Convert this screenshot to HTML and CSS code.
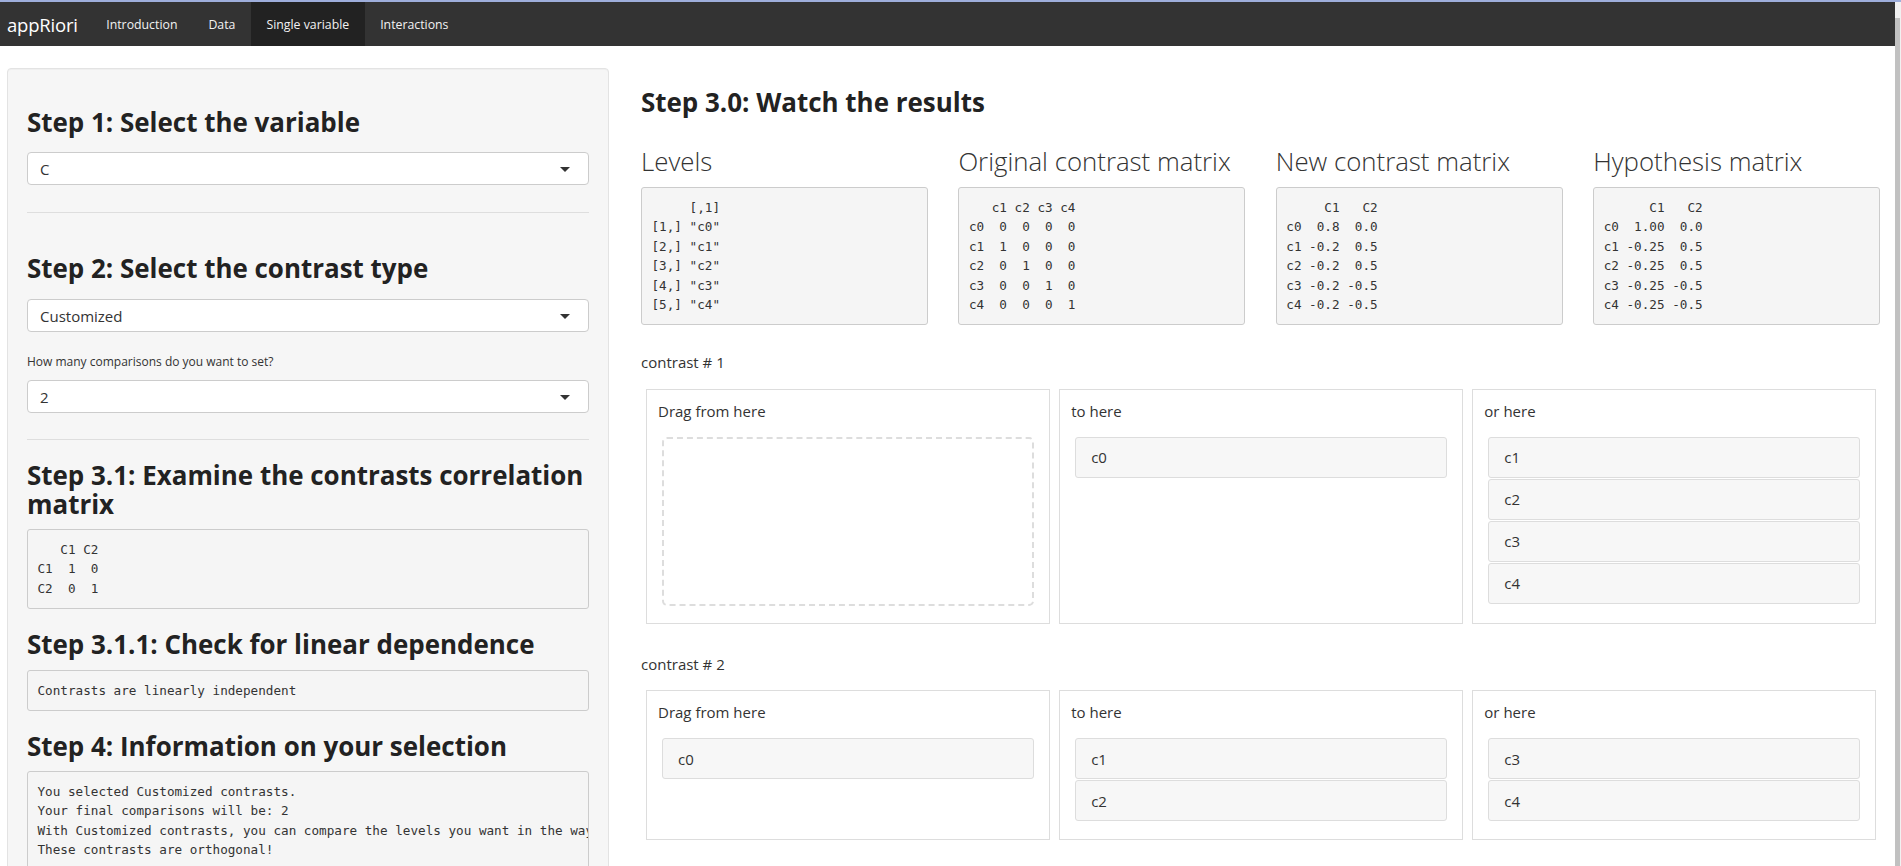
FILE: index.html
```
<!DOCTYPE html>
<html lang="en">
<head>
<meta charset="utf-8">
<title>appRiori</title>
<link rel="stylesheet" href="styles.css">
</head>
<body>
<div class="screen">
  <div class="viewport">
    <nav class="navbar">
      <span class="brand">appRiori</span>
      <ul class="nav">
        <li><a>Introduction</a></li>
        <li><a>Data</a></li>
        <li class="active"><a>Single variable</a></li>
        <li><a>Interactions</a></li>
      </ul>
    </nav>
    <div class="layout">
      <aside class="well">
        <h3 class="step s1">Step 1: Select the variable</h3>
        <div class="select"><span>C</span><i class="caret"></i></div>
        <hr class="hr1">
        <h3 class="step s2">Step 2: Select the contrast type</h3>
        <div class="select"><span>Customized</span><i class="caret"></i></div>
        <label class="small-label">How many comparisons do you want to set?</label>
        <div class="select"><span>2</span><i class="caret"></i></div>
        <hr class="hr2">
        <h3 class="step s31">Step 3.1: Examine the contrasts correlation matrix</h3>
        <pre class="out">   C1 C2
C1  1  0
C2  0  1</pre>
        <h3 class="step s311">Step 3.1.1: Check for linear dependence</h3>
        <pre class="out">Contrasts are linearly independent</pre>
        <h3 class="step s4">Step 4: Information on your selection</h3>
        <pre class="out">You selected Customized contrasts.
Your final comparisons will be: 2
With Customized contrasts, you can compare the levels you want in the way you want.
These contrasts are orthogonal!</pre>
      </aside>
      <main class="main">
        <h3 class="step s30">Step 3.0: Watch the results</h3>
        <div class="results">
          <section class="result">
            <h3 class="result-title">Levels</h3>
            <pre class="out">     [,1]
[1,] "c0"
[2,] "c1"
[3,] "c2"
[4,] "c3"
[5,] "c4"</pre>
          </section>
          <section class="result">
            <h3 class="result-title">Original contrast matrix</h3>
            <pre class="out">   c1 c2 c3 c4
c0  0  0  0  0
c1  1  0  0  0
c2  0  1  0  0
c3  0  0  1  0
c4  0  0  0  1</pre>
          </section>
          <section class="result">
            <h3 class="result-title">New contrast matrix</h3>
            <pre class="out">     C1   C2
c0  0.8  0.0
c1 -0.2  0.5
c2 -0.2  0.5
c3 -0.2 -0.5
c4 -0.2 -0.5</pre>
          </section>
          <section class="result">
            <h3 class="result-title">Hypothesis matrix</h3>
            <pre class="out">      C1   C2
c0  1.00  0.0
c1 -0.25  0.5
c2 -0.25  0.5
c3 -0.25 -0.5
c4 -0.25 -0.5</pre>
          </section>
        </div>

        <div class="contrast-label first">contrast # 1</div>
        <div class="buckets">
          <div class="bucket">
            <div class="bucket-title">Drag from here</div>
            <div class="bucket-list empty"></div>
          </div>
          <div class="bucket">
            <div class="bucket-title">to here</div>
            <div class="bucket-list">
              <div class="item">c0</div>
            </div>
          </div>
          <div class="bucket">
            <div class="bucket-title">or here</div>
            <div class="bucket-list">
              <div class="item">c1</div>
              <div class="item">c2</div>
              <div class="item">c3</div>
              <div class="item">c4</div>
            </div>
          </div>
        </div>

        <div class="contrast-label second">contrast # 2</div>
        <div class="buckets">
          <div class="bucket">
            <div class="bucket-title">Drag from here</div>
            <div class="bucket-list">
              <div class="item">c0</div>
            </div>
          </div>
          <div class="bucket">
            <div class="bucket-title">to here</div>
            <div class="bucket-list">
              <div class="item">c1</div>
              <div class="item">c2</div>
            </div>
          </div>
          <div class="bucket">
            <div class="bucket-title">or here</div>
            <div class="bucket-list">
              <div class="item">c3</div>
              <div class="item">c4</div>
            </div>
          </div>
        </div>
      </main>
    </div>
  </div>
  <div class="scrollbar"><div class="thumb"></div></div>
</div>
</body>
</html>
```

FILE: styles.css
```
* { box-sizing: border-box; }

html, body {
  margin: 0;
  padding: 0;
  height: 866px;
  overflow: hidden;
  background: #fff;
}

body {
  font-family: "Open Sans", "Noto Sans", "Liberation Sans", sans-serif;
  color: #333;
  font-size: 15px;
}

.screen {
  display: flex;
  width: 1901px;
  height: 866px;
  border-top: 2px solid #9eaedb;
}

.viewport {
  width: 1895px;
  overflow: hidden;
}

.scrollbar {
  width: 6px;
  background: #f1f1f1;
  display: flex;
  flex-direction: column;
}

.thumb {
  margin-top: 16px;
  width: 5px;
  flex: 1;
  background: #c1c1c1;
}

/* navbar */
.navbar {
  height: 44px;
  background: #333;
  display: flex;
  align-items: stretch;
}

.brand {
  display: flex;
  align-items: center;
  padding: 0 13px 0 7px;
  font-size: 18.5px;
  color: #fff;
  letter-spacing: -0.2px;
}

.nav {
  display: flex;
  list-style: none;
  margin: 0;
  padding: 0;
}

.nav li a {
  display: flex;
  align-items: center;
  height: 100%;
  padding: 0 15.5px;
  font-size: 12.3px;
  color: #f2f2f2;
}

.nav li.active a {
  background: #222;
}

/* layout */
.layout {
  display: flex;
  gap: 32px;
  padding-left: 7px;
  margin-top: 22px;
}

.well {
  width: 602px;
  flex: none;
  background: #f6f6f6;
  border: 1px solid #e3e3e3;
  border-radius: 4px;
  padding: 19px;
  box-shadow: inset 0 1px 1px rgba(0, 0, 0, 0.03);
}

.main {
  width: 1241px;
  flex: none;
}

.step {
  font-size: 25.95px;
  font-weight: 700;
  line-height: 29.5px;
  color: #222;
  margin: 21px 0 10px;
}

.step.s1 { margin-top: 20px; margin-bottom: 14.5px; }
.step.s2 { margin-top: 41px; margin-bottom: 15.5px; }
.step.s31 { margin-top: 20.5px; margin-bottom: 9.5px; }
.step.s311 { margin-bottom: 11px; }
.step.s30 { margin-top: 20px; margin-bottom: 0; }

.select {
  height: 33px;
  background: #fff;
  border: 1px solid #ccc;
  border-radius: 4px;
  display: flex;
  align-items: center;
  justify-content: space-between;
  padding: 0 18px 0 12px;
  font-size: 15px;
  color: #333;
}

.caret {
  width: 0;
  height: 0;
  border-left: 5px solid transparent;
  border-right: 5px solid transparent;
  border-top: 5px solid #333;
  margin-top: 1px;
}

hr {
  border: 0;
  border-top: 1px solid #dedede;
  margin: 0;
  height: 0;
}

.hr1 { margin-top: 27px; }
.hr2 { margin-top: 26px; }

.small-label {
  display: block;
  font-size: 12px;
  line-height: 17px;
  margin: 21px 0 10px;
  color: #333;
}

.out {
  margin: 0;
  padding: 9.5px;
  border: 1px solid #ccc;
  border-radius: 3px;
  background: #f5f5f5;
  font-family: "DejaVu Sans Mono", "Liberation Mono", monospace;
  font-size: 12.65px;
  line-height: 19.5px;
  color: #333;
  white-space: pre;
  overflow: hidden;
}

/* results grid */
.results {
  display: grid;
  grid-template-columns: repeat(4, 287px);
  column-gap: 30.4px;
  margin-top: 29.5px;
}

.result-title {
  font-size: 25.8px;
  font-weight: 300;
  line-height: 29px;
  color: #333;
  margin: 0 0 11px;
  white-space: nowrap;
}

/* contrasts */
.contrast-label {
  font-size: 15px;
  line-height: 20px;
  color: #333;
}

.contrast-label.first { margin-top: 27px; }
.contrast-label.second { margin-top: 30px; }

.buckets {
  display: flex;
  gap: 9.5px;
  margin: 16.5px 6px 0 5px;
}

.bucket {
  flex: 1;
  border: 1px solid #ddd;
  background: #fff;
  padding: 11px 11px 17px;
  display: flex;
  flex-direction: column;
}

.bucket-title {
  font-size: 15px;
  line-height: 20px;
  color: #333;
  margin-bottom: 16px;
}

.bucket-list {
  flex: 1;
  display: flex;
  flex-direction: column;
  margin: 0 4px;
}

.bucket-list.empty {
  border: 2px dashed #ddd;
  border-radius: 5px;
  min-height: 169px;
}

.item {
  height: 41px;
  border: 1px solid #ddd;
  border-radius: 3px;
  background: #f7f7f7;
  padding: 0 15px;
  display: flex;
  align-items: center;
  font-size: 15px;
  color: #333;
  margin-bottom: 1px;
}
```
